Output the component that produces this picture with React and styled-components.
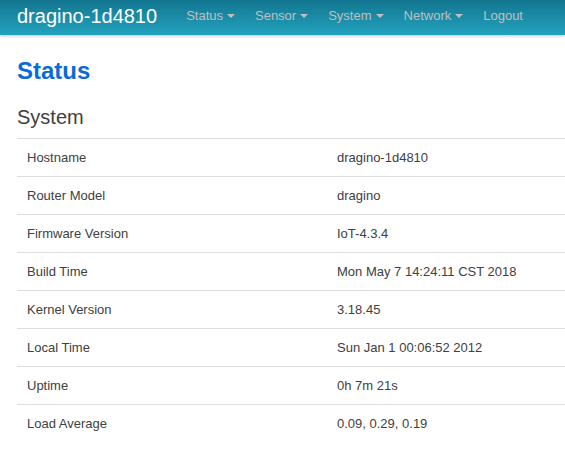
import styled, { createGlobalStyle } from 'styled-components';

const GlobalStyle = createGlobalStyle`
  body {
    margin: 0;
    background: #ffffff;
    font-family: "Liberation Sans", Arial, sans-serif;
    color: #404040;
  }
`;

const navItems = [
  { label: 'Status', caret: true },
  { label: 'Sensor', caret: true },
  { label: 'System', caret: true },
  { label: 'Network', caret: true },
  { label: 'Logout', caret: false },
];

const rows = [
  ['Hostname', 'dragino-1d4810'],
  ['Router Model', 'dragino'],
  ['Firmware Version', 'IoT-4.3.4'],
  ['Build Time', 'Mon May 7 14:24:11 CST 2018'],
  ['Kernel Version', '3.18.45'],
  ['Local Time', 'Sun Jan 1 00:06:52 2012'],
  ['Uptime', '0h 7m 21s'],
  ['Load Average', '0.09, 0.29, 0.19'],
];

const App = () => (
  <PageContainerWithStyled>
    <GlobalStyle />
    <TopBarWithStyled>
      <BrandWithStyled>dragino-1d4810</BrandWithStyled>
      <NavWithStyled>
        {navItems.map((item) => (
          <NavLinkWithStyled key={item.label}>
            {item.label}
            {item.caret && <CaretWithStyled />}
          </NavLinkWithStyled>
        ))}
      </NavWithStyled>
    </TopBarWithStyled>

    <MainAreaWithStyled>
      <PageTitleWithStyled>Status</PageTitleWithStyled>
      <SectionTitleWithStyled>System</SectionTitleWithStyled>
      <TableWithStyled>
        {rows.map(([label, value]) => (
          <RowWithStyled key={label}>
            <CellWithStyled>{label}</CellWithStyled>
            <CellWithStyled>{value}</CellWithStyled>
          </RowWithStyled>
        ))}
      </TableWithStyled>
    </MainAreaWithStyled>
  </PageContainerWithStyled>
);

const PageContainerWithStyled = styled.div`
  min-height: 459px;
`;

const TopBarWithStyled = styled.div`
  display: flex;
  align-items: center;
  height: 35px;
  padding-left: 17px;
  background: linear-gradient(to bottom, #137690, #22a2be);
  box-shadow: 0 1px 3px rgba(0, 0, 0, 0.25);
`;

const BrandWithStyled = styled.div`
  font-size: 20px;
  line-height: 1;
  color: #ffffff;
  margin-right: 19px;
  margin-top: -4px;
`;

const NavWithStyled = styled.div`
  display: flex;
  align-items: center;
`;

const NavLinkWithStyled = styled.div`
  display: flex;
  align-items: center;
  font-size: 13px;
  color: #bfbfbf;
  padding: 0 10px;
  margin-top: -4px;
`;

const CaretWithStyled = styled.span`
  display: inline-block;
  width: 0;
  height: 0;
  margin-left: 4px;
  margin-top: 1px;
  border-left: 4px solid transparent;
  border-right: 4px solid transparent;
  border-top: 4px solid #bfbfbf;
`;

const MainAreaWithStyled = styled.main`
  padding: 22px 0 0 17px;
`;

const PageTitleWithStyled = styled.h2`
  margin: 0;
  font-size: 24px;
  line-height: 28px;
  font-weight: bold;
  color: #0a6bd6;
`;

const SectionTitleWithStyled = styled.h3`
  margin: 20px 0 0;
  font-size: 20px;
  line-height: 24px;
  font-weight: normal;
  color: #404040;
`;

const TableWithStyled = styled.div`
  margin-top: 9px;
`;

const RowWithStyled = styled.div`
  display: grid;
  grid-template-columns: 310px 1fr;
  border-top: 1px solid #dddddd;
  height: 37px;
  align-items: center;
`;

const CellWithStyled = styled.div`
  padding: 0 10px;
  font-size: 13px;
  color: #404040;
`;

export default App;
